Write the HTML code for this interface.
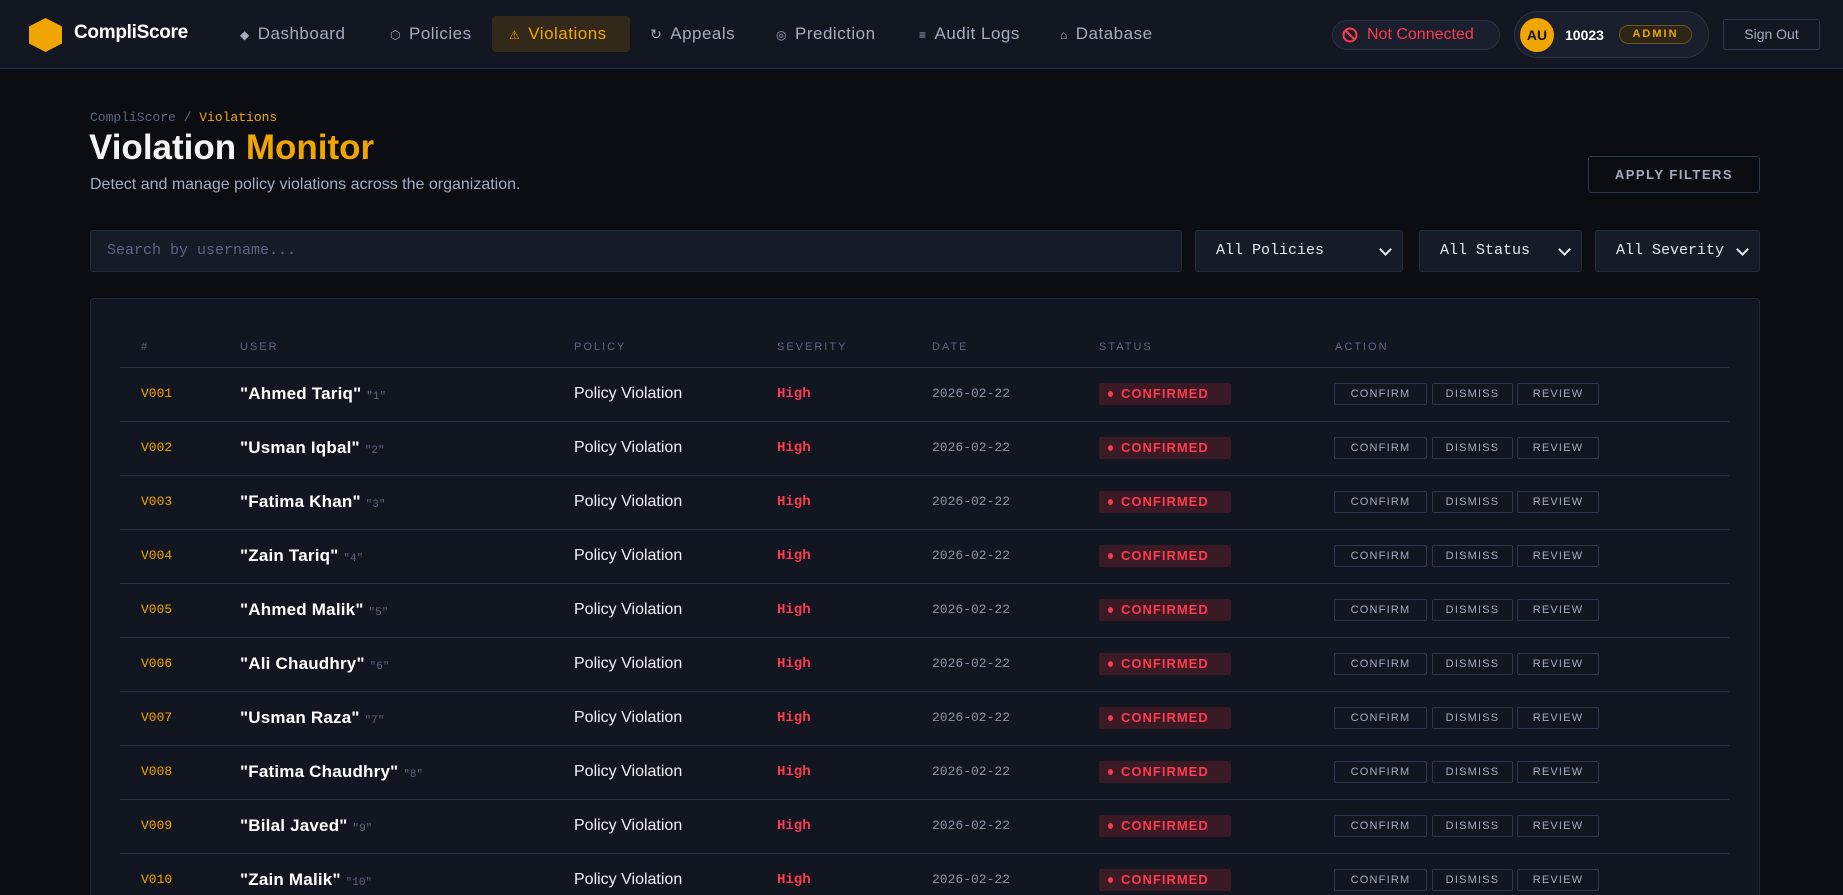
<!DOCTYPE html>
<html><head><meta charset="utf-8"><style>
*{box-sizing:border-box;margin:0;padding:0}
html,body{width:1843px;height:895px;overflow:hidden;background:#0b0d13;font-family:"Liberation Sans",sans-serif;color:#e6e9f0}
#wrap{position:relative;width:1843px;height:895px;overflow:hidden}
.nav{position:absolute;left:0;top:0;width:1843px;height:69px;background:#131722;border-bottom:1px solid #2a3244}
.abs{position:absolute}
.logo{left:74px;top:22px;font-size:19px;font-weight:700;color:#fff;letter-spacing:-.3px}
.ni{position:absolute;top:24px;font-size:17px;letter-spacing:.5px;color:#a4acc2;white-space:nowrap}
.ni i{font-style:normal;font-size:12px;margin-right:8px;color:#a4acc2}
.act{left:492px;top:16px;width:138px;height:36px;background:#33291a;border-radius:4px}
.mono{font-family:"Liberation Mono",monospace}
.pill{border:1px solid #2a3244;background:#1a1f2d;border-radius:20px}
.btn{position:absolute;border:1px solid #2e3850;color:#a4acc2;border-radius:3px;text-align:center}
.inp{position:absolute;top:230px;height:42px;background:#161b28;border:1px solid #252c3d;border-radius:3px;font-size:15px;color:#e6e9f0;font-family:"Liberation Mono",monospace;padding-left:16px;line-height:40px}
.sel{padding-left:20px}
.sel:after{content:"";position:absolute;right:12px;top:14px;width:7px;height:7px;border-right:2px solid #e6e9f0;border-bottom:2px solid #e6e9f0;transform:rotate(45deg)}
.card{left:90px;top:298px;width:1670px;height:597px;background:#121621;border:1px solid #222838;border-bottom:none;border-radius:4px 4px 0 0}
.th{position:absolute;top:341px;font-size:11px;letter-spacing:2px;color:#5c6682}
.hl{position:absolute;left:120px;width:1609px;height:1px;background:#2a3248}
.row{position:absolute;left:0;width:1843px;height:54px}
.row .c{position:absolute;top:0;line-height:54px;white-space:nowrap}
.id{left:141px;color:#f0a500;font-size:13px;font-family:"Liberation Mono",monospace}
.nm{left:240px;font-size:17px;font-weight:700;color:#fff;letter-spacing:.2px}
.nm span{font-family:"Liberation Mono",monospace;font-weight:400;font-size:11px;color:#5c6682;letter-spacing:0}
.po{left:574px;font-size:16px;color:#f0f2f7;letter-spacing:0}
.sv{left:777px;font-size:14px;font-weight:700;color:#ff3b4f;font-family:"Liberation Mono",monospace}
.dt{left:932px;font-size:13px;color:#8a93a8;font-family:"Liberation Mono",monospace}
.bd{position:absolute;left:1099px;top:16px;width:132px;height:22px;background:#3a1a24;border-radius:2px;color:#ff3b4f;font-size:13px;font-weight:700;letter-spacing:1px;line-height:22px;padding-left:22px}
.bd:before{content:"";position:absolute;left:9px;top:8px;width:5px;height:6px;border-radius:50%;background:#ff3b4f}
.ab{position:absolute;top:16px;height:22px;border:1px solid #2e3850;border-radius:2px;color:#a4acc2;font-size:11px;letter-spacing:1.2px;text-align:center;line-height:20px;background:#121621}
</style></head><body><div id="wrap">
<div class="nav">
<svg class="abs" style="left:29px;top:18px" width="33" height="34" viewBox="0 0 33 34"><polygon points="16.5,0 33,8.5 33,25.5 16.5,34 0,25.5 0,8.5" fill="#f0a500"/></svg>
<div class="abs logo">CompliScore</div>
<div class="ni" style="left:240px"><i>◆</i>Dashboard</div>
<div class="ni" style="left:390px"><i>⬡</i>Policies</div>
<div class="abs act"></div>
<div class="ni" style="left:509px;color:#f0a500;font-weight:400"><i style="color:#f0a500">⚠</i>Violations</div>
<div class="ni" style="left:650px"><i style="font-size:14px">↻</i>Appeals</div>
<div class="ni" style="left:776px"><i>◎</i>Prediction</div>
<div class="ni" style="left:919px"><i>≡</i>Audit Logs</div>
<div class="ni" style="left:1060px"><i>⌂</i>Database</div>
<div class="abs pill" style="left:1332px;top:20px;width:168px;height:30px"></div>
<svg class="abs" style="left:1342px;top:27px" width="16" height="16" viewBox="0 0 16 16"><circle cx="8" cy="8" r="6.5" fill="none" stroke="#ff3b4f" stroke-width="2"/><line x1="3.5" y1="3.5" x2="12.5" y2="12.5" stroke="#ff3b4f" stroke-width="2"/></svg>
<div class="abs" style="left:1367px;top:26px;font-size:16px;color:#ff3b4f">Not Connected</div>
<div class="abs pill" style="left:1514px;top:11px;width:195px;height:47px;border-radius:24px"></div>
<div class="abs" style="left:1520px;top:18px;width:34px;height:34px;border-radius:50%;background:#f0a500;color:#111;font-weight:700;font-size:14px;text-align:center;line-height:34px">AU</div>
<div class="abs" style="left:1565px;top:27px;font-size:14px;font-weight:700;color:#fff">10023</div>
<div class="abs" style="left:1619px;top:25px;width:73px;height:19px;border:1px solid #6b5520;background:#2d2616;border-radius:10px;color:#f0a500;font-size:11px;font-weight:700;letter-spacing:2px;text-align:center;line-height:17px">ADMIN</div>
<div class="btn" style="left:1723px;top:19px;width:97px;height:31px;font-size:14px;line-height:29px">Sign Out</div>
</div>
<div class="abs mono" style="left:90px;top:110px;font-size:13px;color:#5c6682">CompliScore / <span style="color:#f0a500">Violations</span></div>
<div class="abs" style="left:89px;top:128px;font-size:35px;font-weight:700;color:#f2f4f8;letter-spacing:0">Violation <span style="color:#f0a500">Monitor</span></div>
<div class="abs" style="left:90px;top:176px;font-size:16px;color:#a4acc2">Detect and manage policy violations across the organization.</div>
<div class="btn" style="left:1588px;top:156px;width:172px;height:37px;font-size:13px;font-weight:700;letter-spacing:1.5px;line-height:35px">APPLY FILTERS</div>
<div class="inp" style="left:90px;width:1092px;color:#5c6682">Search by username...</div>
<div class="inp sel" style="left:1195px;width:208px">All Policies</div>
<div class="inp sel" style="left:1419px;width:163px">All Status</div>
<div class="inp sel" style="left:1595px;width:165px;padding-left:20px">All Severity</div>
<div class="abs card"></div>
<div class="th" style="left:141px">#</div>
<div class="th" style="left:240px">USER</div>
<div class="th" style="left:574px">POLICY</div>
<div class="th" style="left:777px">SEVERITY</div>
<div class="th" style="left:932px">DATE</div>
<div class="th" style="left:1099px">STATUS</div>
<div class="th" style="left:1335px">ACTION</div>
<div class="hl" style="top:367px"></div>
<div id="rows"></div>
</div>
<script>
var n=["Ahmed Tariq","Usman Iqbal","Fatima Khan","Zain Tariq","Ahmed Malik","Ali Chaudhry","Usman Raza","Fatima Chaudhry","Bilal Javed","Zain Malik"];
var h="";
for(var i=0;i<10;i++){var t=367+i*54;
h+='<div class="row" style="top:'+t+'px"><div class="c id">V'+String(i+1).padStart(3,"0")+'</div><div class="c nm">"'+n[i]+'" <span>"'+(i+1)+'"</span></div><div class="c po">Policy Violation</div><div class="c sv">High</div><div class="c dt">2026-02-22</div><div class="bd">CONFIRMED</div><div class="ab" style="left:1334px;width:93px">CONFIRM</div><div class="ab" style="left:1432px;width:81px">DISMISS</div><div class="ab" style="left:1517px;width:82px">REVIEW</div></div>'+(i<9?'<div class="hl" style="top:'+(t+54)+'px"></div>':'');}
document.getElementById("rows").innerHTML=h;
</script>
</body></html>
